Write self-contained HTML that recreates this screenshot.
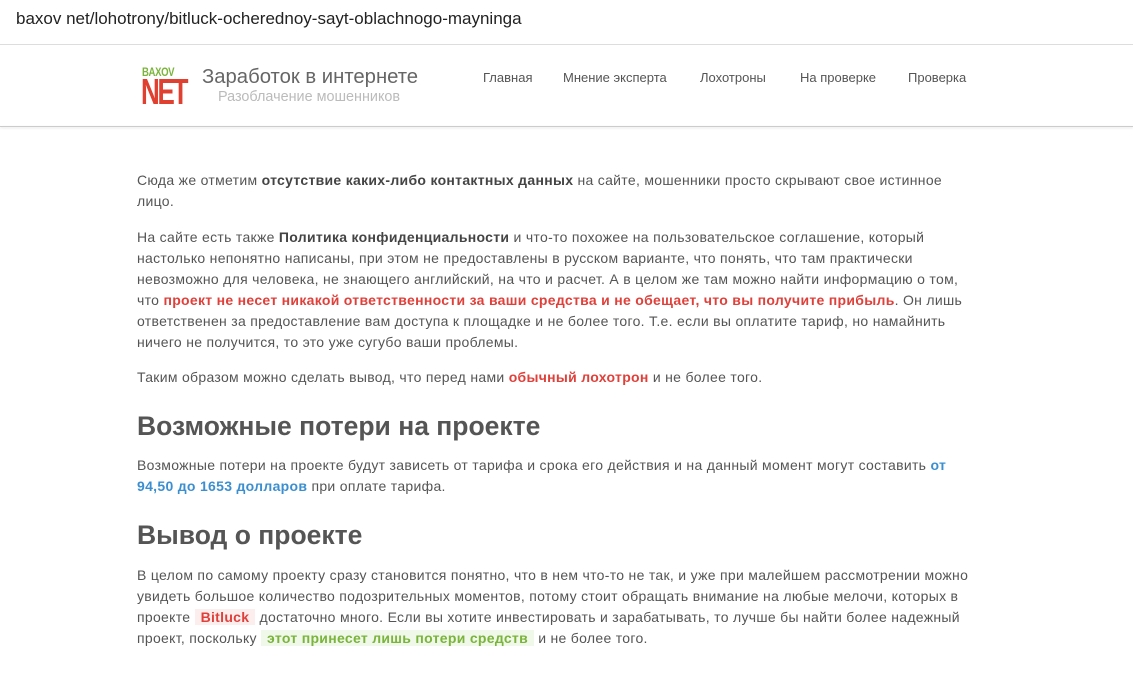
<!DOCTYPE html>
<html><head><meta charset="utf-8"><style>
body{margin:0;width:1133px;height:679px;background:#fff;font-family:"Liberation Sans",sans-serif;overflow:hidden;position:relative;color:#555}
.url{position:absolute;left:16px;top:9px;font-size:17px;color:#222}
.bar{position:absolute;left:0;top:44px;width:1133px;border-top:1px solid #ddd}
.hdr{position:absolute;left:0;top:126px;width:1133px;border-top:1px solid #ccc;box-shadow:0 1px 2px #ddd}
.logo{position:absolute;left:141px;top:65px;width:42px;height:46px}
.l1{position:absolute;left:1px;top:0;font-size:12px;font-weight:bold;color:#7ab43a;letter-spacing:-0.5px;transform:scaleX(0.8);transform-origin:left}
.l2{position:absolute;left:0;top:9px;font-size:36px;line-height:36px;font-weight:bold;color:#e0402f;letter-spacing:-3px;transform:scaleX(0.72);transform-origin:left}
.t1{position:absolute;left:202px;top:66px;font-size:20.3px;color:#666}
.t2{position:absolute;left:218px;top:89px;font-size:14.4px;color:#bbb}
.nav{position:absolute;top:70px;font-size:13px;color:#555}
.c{position:absolute;left:137px;width:900px;font-size:14px;line-height:21px;color:#555;letter-spacing:0.3px;white-space:nowrap}
.c p{margin:0}
b{color:#444}
.r{color:#e0403a;font-weight:bold}
.bl{color:#3b8fd0;font-weight:bold}
h2{position:absolute;left:137px;margin:0;font-size:26.5px;font-weight:bold;color:#555;letter-spacing:0}
.hr{background:#fdeeee;padding:0 6px;color:#e0403a;font-weight:bold}
.hg{background:#f0f8ea;padding:0 6px;color:#7ab43a;font-weight:bold}
</style></head><body>
<div class="url">baxov net/lohotrony/bitluck-ocherednoy-sayt-oblachnogo-mayninga</div>
<div class="bar"></div>
<div class="logo"><div class="l1">BAXOV</div><div class="l2">NET</div></div>
<div class="t1">Заработок в интернете</div>
<div class="t2">Разоблачение мошенников</div>
<div class="nav" style="left:483px">Главная</div>
<div class="nav" style="left:563px">Мнение эксперта</div>
<div class="nav" style="left:700px">Лохотроны</div>
<div class="nav" style="left:800px">На проверке</div>
<div class="nav" style="left:908px">Проверка</div>
<div class="hdr"></div>
<div class="c" style="top:170px"><p>Сюда же отметим <b>отсутствие каких-либо контактных данных</b> на сайте, мошенники просто скрывают свое истинное<br>лицо.</p></div>
<div class="c" style="top:227px"><p>На сайте есть также <b>Политика конфиденциальности</b> и что-то похожее на пользовательское соглашение, который<br>настолько непонятно написаны, при этом не предоставлены в русском варианте, что понять, что там практически<br>невозможно для человека, не знающего английский, на что и расчет. А в целом же там можно найти информацию о том,<br>что <span class="r">проект не несет никакой ответственности за ваши средства и не обещает, что вы получите прибыль</span>. Он лишь<br>ответственен за предоставление вам доступа к площадке и не более того. Т.е. если вы оплатите тариф, но намайнить<br>ничего не получится, то это уже сугубо ваши проблемы.</p></div>
<div class="c" style="top:367px"><p>Таким образом можно сделать вывод, что перед нами <span class="r">обычный лохотрон</span> и не более того.</p></div>
<h2 style="top:411px">Возможные потери на проекте</h2>
<div class="c" style="top:455px"><p>Возможные потери на проекте будут зависеть от тарифа и срока его действия и на данный момент могут составить <span class="bl">от</span><br><span class="bl">94,50 до 1653 долларов</span> при оплате тарифа.</p></div>
<h2 style="top:520px">Вывод о проекте</h2>
<div class="c" style="top:565px"><p>В целом по самому проекту сразу становится понятно, что в нем что-то не так, и уже при малейшем рассмотрении можно<br>увидеть большое количество подозрительных моментов, потому стоит обращать внимание на любые мелочи, которых в<br>проекте <span class="hr">Bitluck</span> достаточно много. Если вы хотите инвестировать и зарабатывать, то лучше бы найти более надежный<br>проект, поскольку <span class="hg">этот принесет лишь потери средств</span> и не более того.</p></div>
</body></html>
